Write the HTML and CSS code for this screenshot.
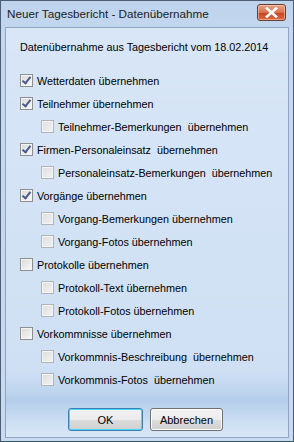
FILE: index.html
```html
<!DOCTYPE html>
<html>
<head>
<meta charset="utf-8">
<link rel="stylesheet" href="styles.css">
</head>
<body>
<div class="window">
  <div class="titlebar">
    <span class="title">Neuer Tagesbericht - Datenübernahme</span>
    <span class="close"><svg width="13" height="11" viewBox="0 0 13 11"><path d="M2 1.5 L11 9.5 M11 1.5 L2 9.5" stroke="#fff" stroke-width="2.6" stroke-linecap="square"/></svg></span>
  </div>
  <div class="client">
    <div class="heading">Datenübernahme aus Tagesbericht vom 18.02.2014</div>
    <div class="list">
      <label class="row"><span class="cb on"></span>Wetterdaten übernehmen</label>
      <label class="row"><span class="cb on"></span>Teilnehmer übernehmen</label>
      <label class="row sub"><span class="cb dis"></span>Teilnehmer-Bemerkungen&nbsp; übernehmen</label>
      <label class="row"><span class="cb on"></span>Firmen-Personaleinsatz&nbsp; übernehmen</label>
      <label class="row sub"><span class="cb dis"></span>Personaleinsatz-Bemerkungen&nbsp; übernehmen</label>
      <label class="row"><span class="cb on"></span>Vorgänge übernehmen</label>
      <label class="row sub"><span class="cb dis"></span>Vorgang-Bemerkungen übernehmen</label>
      <label class="row sub"><span class="cb dis"></span>Vorgang-Fotos übernehmen</label>
      <label class="row"><span class="cb"></span>Protokolle übernehmen</label>
      <label class="row sub"><span class="cb dis"></span>Protokoll-Text übernehmen</label>
      <label class="row sub"><span class="cb dis"></span>Protokoll-Fotos übernehmen</label>
      <label class="row"><span class="cb"></span>Vorkommnisse übernehmen</label>
      <label class="row sub"><span class="cb dis"></span>Vorkommnis-Beschreibung&nbsp; übernehmen</label>
      <label class="row sub"><span class="cb dis"></span>Vorkommnis-Fotos&nbsp; übernehmen</label>
    </div>
    <div class="buttons">
      <button class="btn default">OK</button>
      <button class="btn">Abbrechen</button>
    </div>
  </div>
</div>
</body>
</html>
```
FILE: styles.css
```css
html, body { margin: 0; padding: 0; }
body { width: 294px; height: 442px; overflow: hidden; font-family: "Liberation Sans", Arial, sans-serif; }
.window {
  box-sizing: border-box;
  width: 294px; height: 442px;
  border: 1px solid #4d5e74;
  border-bottom-color: #2e5a66;
  background: linear-gradient(#bed3ec, #c3d7ef 30px, #c7daf0);
  display: flex; flex-direction: column;
  padding: 0 4px 3px 4px;
}
.titlebar {
  height: 26px; display: flex; align-items: center; justify-content: space-between;
  padding: 0 2px 0 2px; flex: none;
}
.title { font-size: 11.7px; color: #222; margin-top: -1px; }
.close {
  width: 29px; height: 17px; box-sizing: border-box; margin-right: 1px; margin-top: -3px;
  border: 1px solid #6b3b2e; border-radius: 3px;
  background: linear-gradient(#e8a58e, #d9704d 50%, #c8461f 55%, #d86a48);
  display: flex; align-items: center; justify-content: center;
  box-shadow: inset 0 0 0 1px rgba(255,220,200,0.5);
}
.client {
  flex: 1; border: 1px solid #8ea4c0;
  background: linear-gradient(#d8e6f7, #cfe0f4 340px, #c0d6ef 362px, #b4cdea 372px, #cde0f4 395px, #d9e7f7);
  display: flex; flex-direction: column;
  font-size: 10.8px; color: #000;
}
.heading { padding: 12px 0 0 14px; height: 16px; line-height: 14px; }
.list { display: flex; flex-direction: column; padding: 13px 0 0 14px; }
.row { display: flex; align-items: center; height: 23px; white-space: pre; }
.row.sub { padding-left: 21px; }
.cb {
  width: 13px; height: 13px; box-sizing: border-box; margin-right: 4px;
  border: 1px solid #8f8f8f; background: linear-gradient(135deg, #d8d8d8, #fafafa);
  box-shadow: inset 0 0 0 1px #f4f4f4;
  position: relative;
}
.cb.dis { border-color: #b4b4b4; background: linear-gradient(135deg, #dedede, #f2f2f2); }
.cb.on::after {
  content: ""; position: absolute; left: 3px; top: 0px; width: 3px; height: 7px;
  border: solid #4a5a8c; border-width: 0 2px 2px 0; transform: rotate(38deg);
}
.buttons { margin-top: auto; display: flex; justify-content: center; gap: 7px; padding: 0 0 6px 0; margin-left: -3px; }
.btn {
  font-family: "Liberation Sans", Arial, sans-serif; font-size: 11px; color: #000;
  height: 23px; border-radius: 3px; border: 1px solid #707070; padding: 0;
  background: linear-gradient(#f2f2f2, #ebebeb 50%, #dddddd 51%, #cfcfcf);
  box-shadow: inset 0 0 0 1px #fcfcfc;
}
.btn.default { width: 75px; border-color: #3c7fb1; box-shadow: inset 0 0 0 1px #48d8fb; }
.btn:not(.default) { width: 73px; }
```
